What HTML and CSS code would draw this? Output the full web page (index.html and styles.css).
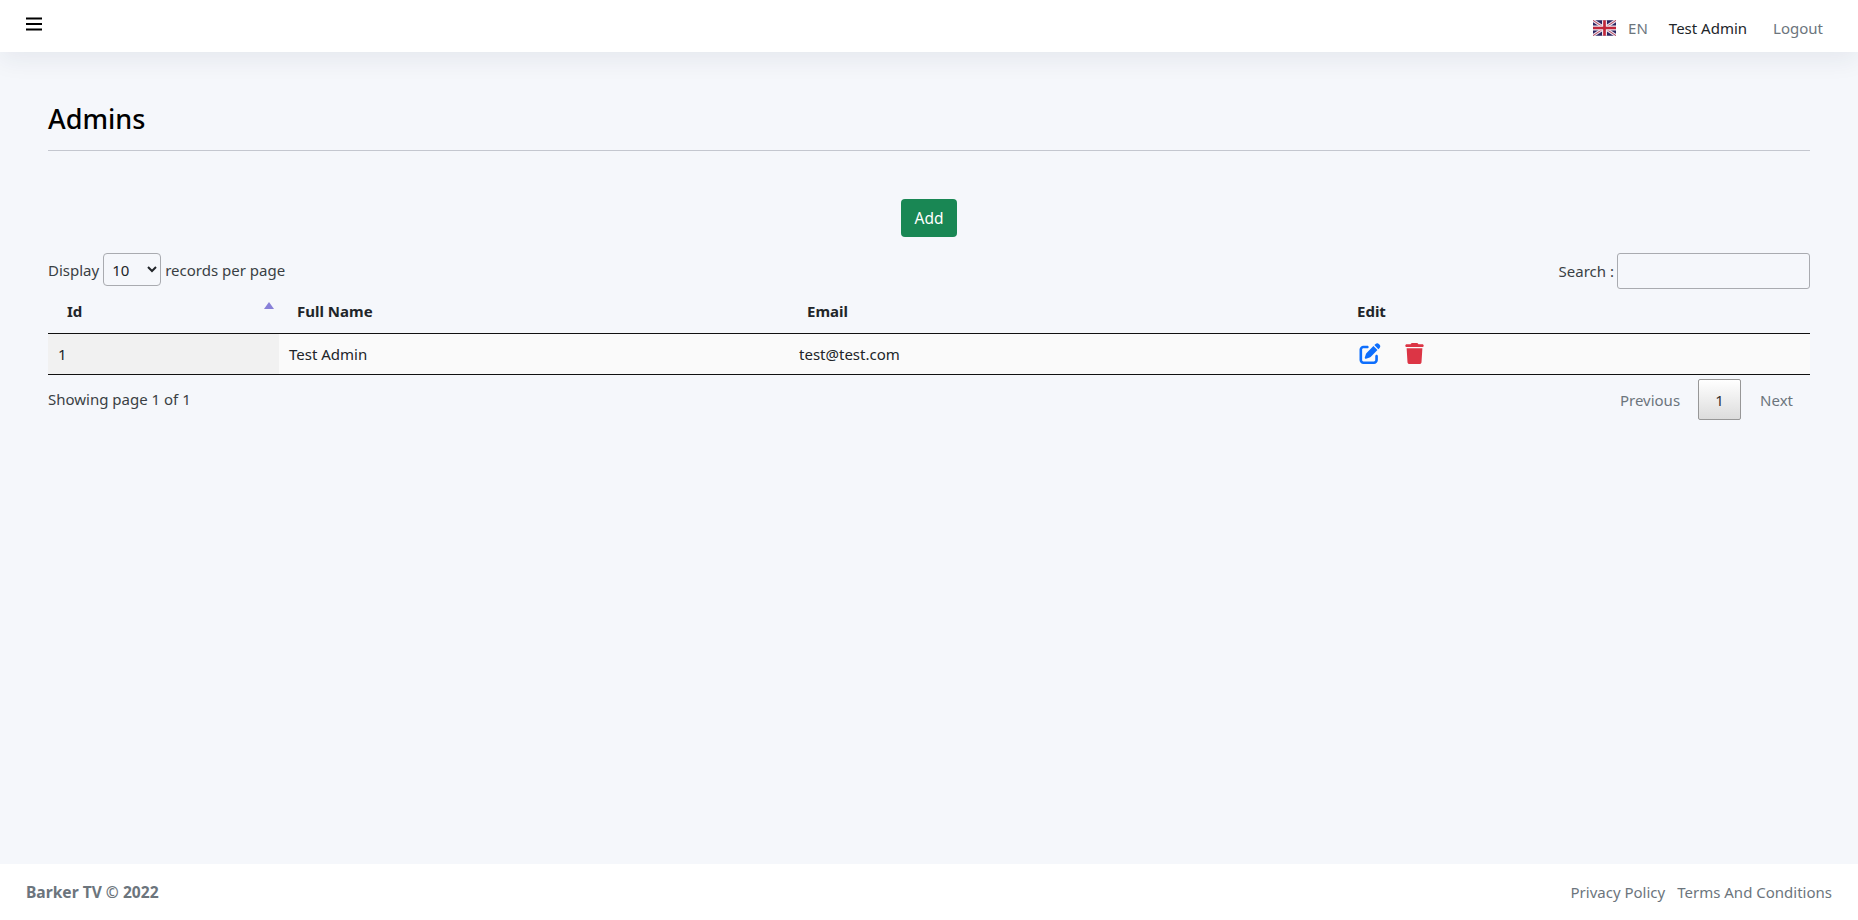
FILE: index.html
```html
<!DOCTYPE html>
<html lang="en">
<head>
<meta charset="utf-8">
<title>Admins</title>
<link rel="stylesheet" href="styles.css">
</head>
<body>
<nav class="topbar">
  <button class="burger" aria-label="Toggle"><svg width="16" height="14" viewBox="0 0 16 14"><path d="M0 1.5h16M0 7h16M0 12.5h16" stroke="#000" stroke-width="2" fill="none"/></svg></button>
  <div class="topnav">
    <span class="lang">
      <svg class="flag" width="23" height="16" viewBox="0 0 60 40">
        <rect width="60" height="40" rx="2" fill="#2b2560"/>
        <path d="M0 0L60 40M60 0L0 40" stroke="#e6dfee" stroke-width="8"/>
        <path d="M0 0L60 40M60 0L0 40" stroke="#b8404f" stroke-width="2.5"/>
        <path d="M30 0V40M0 20H60" stroke="#efe9f2" stroke-width="13"/>
        <path d="M30 0V40M0 20H60" stroke="#c0273a" stroke-width="7"/>
      </svg>
      <a class="navlink en">EN</a>
    </span>
    <a class="navlink user">Test Admin</a>
    <a class="navlink logout">Logout</a>
  </div>
</nav>

<main class="content">
  <h1 class="title">Admins</h1>
  <div class="addrow"><button class="btn-add">Add</button></div>
  <div class="controls">
    <label class="ctl">Display <select class="perpage"><option>10</option></select> records per page</label>
    <label class="ctl">Search : <input class="search" type="text"></label>
  </div>
  <table class="grid">
    <colgroup><col class="c1"><col class="c2"><col class="c3"><col class="c4"></colgroup>
    <thead>
      <tr>
        <th class="sorted">Id<span class="sort"></span></th>
        <th>Full Name</th>
        <th>Email</th>
        <th>Edit</th>
      </tr>
    </thead>
    <tbody>
      <tr>
        <td class="sortcell">1</td>
        <td>Test Admin</td>
        <td>test@test.com</td>
        <td>
          <div class="actions">
          <svg class="ico" width="22" height="21" viewBox="0 0 512 512"><path fill="#0d6efd" d="M471.6 21.7c-21.9-21.9-57.3-21.9-79.2 0L362.3 51.7l97.9 97.9 30.1-30.1c21.9-21.9 21.9-57.3 0-79.2L471.6 21.7zm-299.2 220c-6.1 6.1-10.8 13.6-13.5 21.9l-29.6 88.8c-2.9 8.6-.6 18.1 5.8 24.6s15.9 8.7 24.6 5.8l88.8-29.6c8.2-2.7 15.7-7.4 21.9-13.5L437.7 172.3 339.7 74.3 172.4 241.7zM96 64C43 64 0 107 0 160V416c0 53 43 96 96 96H352c53 0 96-43 96-96V320c0-17.7-14.3-32-32-32s-32 14.3-32 32v96c0 17.7-14.3 32-32 32H96c-17.7 0-32-14.3-32-32V160c0-17.7 14.3-32 32-32h96c17.7 0 32-14.3 32-32s-14.3-32-32-32H96z"/></svg>
          <svg class="ico" width="19" height="21" viewBox="0 0 448 512"><path fill="#dc3545" d="M135.2 17.7L128 32H32C14.3 32 0 46.3 0 64S14.3 96 32 96H416c17.7 0 32-14.3 32-32s-14.3-32-32-32H320l-7.2-14.3C307.4 6.8 296.3 0 284.2 0H163.8c-12.1 0-23.2 6.8-28.6 17.7zM416 128H32L53.2 467c1.6 25.3 22.6 45 47.9 45H346.9c25.3 0 46.3-19.7 47.9-45L416 128z"/></svg>
          </div>
        </td>
      </tr>
    </tbody>
  </table>
  <div class="tablefoot">
    <span class="showing">Showing page 1 of 1</span>
    <div class="pager">
      <a class="pg">Previous</a>
      <a class="pg current">1</a>
      <a class="pg">Next</a>
    </div>
  </div>
</main>

<footer class="footer">
  <strong class="brand">Barker TV © 2022</strong>
  <div class="flinks"><a>Privacy Policy</a><a>Terms And Conditions</a></div>
</footer>
</body>
</html>
```
FILE: styles.css
```css
* { box-sizing: border-box; }
html, body { height: 100%; }
body {
  margin: 0;
  height: 920px;
  display: flex;
  flex-direction: column;
  background: #f5f7fb;
  color: #212529;
  font-family: "Noto Sans", "Open Sans", sans-serif;
  font-size: 15px;
  line-height: 24px;
  overflow: hidden;
}
.topbar {
  height: 52px;
  flex: none;
  background: #fff;
  box-shadow: 0 8px 24px rgba(30, 40, 70, .07);
  display: flex;
  align-items: flex-start;
  justify-content: space-between;
  padding: 0 35px 0 26px;
  position: relative;
}
.burger { border: 0; background: none; padding: 0; margin-top: 17px; height: 14px; display: block; line-height: 0; }
.topnav { display: flex; align-items: center; height: 56px; }
.lang { display: flex; align-items: center; }
.flag { margin-right: 12px; display: block; }
.navlink { color: #6c757d; }
.user { color: #212529; margin-left: 21px; }
.logout { margin-left: 26px; }
.content { flex: 1; padding: 0 48px; }
.title {
  margin: 0;
  padding-top: 49px;
  height: 99px;
  border-bottom: 1px solid #c4c7cf;
  font-size: 27px;
  font-weight: 500;
  line-height: 36px;
  color: #000;
}
.addrow { display: flex; justify-content: center; margin-top: 48px; }
.btn-add {
  width: 56px;
  height: 38px;
  background: #198754;
  color: #fff;
  border: 0;
  border-radius: 4px;
  font: inherit;
  font-size: 15.5px;
  padding: 0;
}
.controls { display: flex; justify-content: space-between; align-items: flex-start; margin-top: 16px; height: 36px; color: #3a3f44; }
.ctl { display: flex; align-items: center; gap: 4px; }
.ctl:last-child { gap: 3px; }
.perpage {
  width: 58px;
  height: 33px;
  font: inherit;
  color: #212529;
  background: #f5f7fb;
  border: 1px solid #a9abb0;
  border-radius: 4px;
  padding-left: 4px;
}
.search {
  width: 193px;
  height: 36px;
  border: 1px solid #a9abb0;
  border-radius: 3px;
  background: transparent;
}
.grid { width: 100%; border-collapse: collapse; table-layout: fixed; margin-top: 1px; }
.c1 { width: 231px; }
.c2 { width: 510px; }
.c3 { width: 551px; }
th {
  height: 43px;
  text-align: left;
  font-weight: 700;
  padding: 0 17px 0 19px;
  border-bottom: 1px solid #111;
  position: relative;
  color: #212529;
}
th:nth-child(2) { padding-left: 18px; }
th:nth-child(3) { padding-left: 18px; }
th:nth-child(4) { padding-left: 17px; }
.sort {
  position: absolute;
  right: 5px;
  top: 12px;
  border: 5px solid transparent;
  border-top: 0;
  border-bottom: 7px solid #8880d8;
}
td {
  height: 41px;
  padding: 0 10px;
  background: #fafafa;
  border-bottom: 1px solid #111;
}
.sortcell { background: #f1f1f1; }
.actions { display: flex; align-items: center; gap: 24px; padding-left: 9px; margin-top: -1px; }
.ico { display: block; }
.tablefoot { display: flex; justify-content: space-between; align-items: flex-start; padding-top: 4px; }
.showing { margin-top: 8px; color: #3a3f44; }
.pager { display: flex; align-items: center; color: #6c757d; }
.pg { padding: 1px 18px 0 18px; height: 41px; line-height: 41px; color: #6c757d; }
.pg.current {
  width: 43px;
  padding: 0;
  text-align: center;
  color: #333;
  border: 1px solid #979797;
  border-radius: 2px;
  background: linear-gradient(#fff, #dcdcdc);
}
.pg:last-child { padding-left: 19px; padding-right: 17px; }
.footer {
  height: 56px;
  flex: none;
  background: #fff;
  color: #6c757d;
  display: flex;
  align-items: center;
  justify-content: space-between;
  padding: 0 26px;
}
.brand { font-weight: 700; font-size: 15.6px; }
.flinks { display: flex; gap: 12px; }
```
